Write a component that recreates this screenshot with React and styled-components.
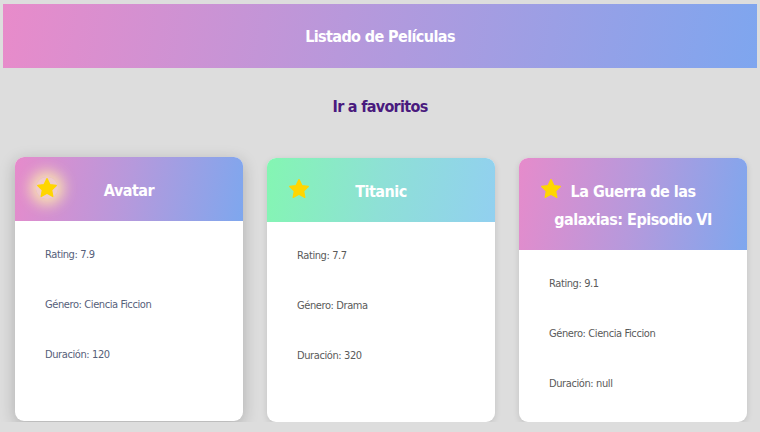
import React from "react";
import styled, { createGlobalStyle, css } from "styled-components";

const GlobalStyle = createGlobalStyle`
  body {
    margin: 0;
    background-color: #dddddd;
    font-family: "DejaVu Sans Condensed", "Liberation Sans", sans-serif;
  }
`;

const Page = styled.div`
  padding: 4px 3px 0 3px;
`;

const Header = styled.header`
  height: 64px;
  display: flex;
  align-items: center;
  justify-content: center;
  background: linear-gradient(100deg, #e88bca 0%, #b898db 45%, #7ea6ef 100%);
  color: white;
  font-size: 16px;
  letter-spacing: -0.6px;
  font-weight: bold;
`;

const FavLink = styled.a`
  display: block;
  text-align: center;
  margin: 28px 0 0 0;
  color: #4a1a7e;
  font-size: 16px;
  letter-spacing: -0.7px;
  line-height: 22px;
  font-weight: bold;
  text-decoration: none;
  cursor: pointer;
`;

const CardGrid = styled.div`
  display: grid;
  grid-template-columns: repeat(3, 228px);
  gap: 24px;
  padding: 0 12px;
  margin-top: 40px;
`;

const Card = styled.div`
  height: 264px;
  background: white;
  border-radius: 9px;
  overflow: hidden;
  box-shadow: 0 2px 6px rgba(0, 0, 0, 0.12);
  ${({ hovered }) =>
    hovered &&
    css`
      transform: translateY(-1px);
      box-shadow: 0 4px 16px rgba(0, 0, 0, 0.22);
    `}
`;

const CardHeader = styled.div`
  position: relative;
  padding: 18px 30px 16px;
  background: ${({ variant }) =>
    variant === "green"
      ? "linear-gradient(100deg, #84f6b2 0%, #8ee0d6 50%, #92d0f0 100%)"
      : "linear-gradient(100deg, #e68bcb 0%, #b699dc 50%, #7ea7ee 100%)"};
`;

const Title = styled.h2`
  margin: 0;
  text-align: center;
  color: white;
  font-size: 16px;
  letter-spacing: -0.5px;
  font-weight: bold;
  line-height: 28px;
  padding-top: 2px;
`;

const StarBadge = styled.span`
  position: absolute;
  left: 21px;
  top: 20px;
  width: 22px;
  height: 22px;
  display: flex;
  border-radius: 50%;
  ${({ glow }) =>
    glow &&
    css`
      box-shadow: 0 0 14px 6px rgba(255, 240, 170, 0.85);
      background: rgba(255, 245, 200, 0.6);
    `}
`;

const CardBody = styled.div`
  padding: 27px 30px;
  display: flex;
  flex-direction: column;
  gap: 36px;
`;

const Info = styled.p`
  margin: 0;
  font-size: 11px;
  letter-spacing: -0.4px;
  line-height: 14px;
  color: ${({ tint }) => (tint ? "#56607a" : "#5a5a5a")};
`;

const Star = () => (
  <svg width="22" height="22" viewBox="0 0 24 24">
    <path
      d="M12 1.8l3.1 6.5 7 .9-5.1 4.9 1.3 7-6.3-3.4-6.3 3.4 1.3-7L1.9 9.2l7-.9z"
      fill="#ffd600"
      stroke="#ffd600"
      strokeWidth="1.5"
      strokeLinejoin="round"
    />
  </svg>
);

const movies = [
  { title: "Avatar", rating: "7.9", genre: "Ciencia Ficcion", duration: "120", variant: "pink", hovered: true },
  { title: "Titanic", rating: "7.7", genre: "Drama", duration: "320", variant: "green" },
  { title: "La Guerra de las galaxias: Episodio VI", rating: "9.1", genre: "Ciencia Ficcion", duration: "null", variant: "pink" },
];

function App() {
  return (
    <Page>
      <GlobalStyle />
      <Header>Listado de Películas</Header>
      <FavLink>Ir a favoritos</FavLink>
      <CardGrid>
        {movies.map((m) => (
          <Card key={m.title} hovered={m.hovered}>
            <CardHeader variant={m.variant}>
              <StarBadge glow={m.hovered}>
                <Star />
              </StarBadge>
              <Title>{m.title}</Title>
            </CardHeader>
            <CardBody>
              <Info tint={m.hovered}>Rating: {m.rating}</Info>
              <Info tint={m.hovered}>Género: {m.genre}</Info>
              <Info tint={m.hovered}>Duración: {m.duration}</Info>
            </CardBody>
          </Card>
        ))}
      </CardGrid>
    </Page>
  );
}

export default App;
